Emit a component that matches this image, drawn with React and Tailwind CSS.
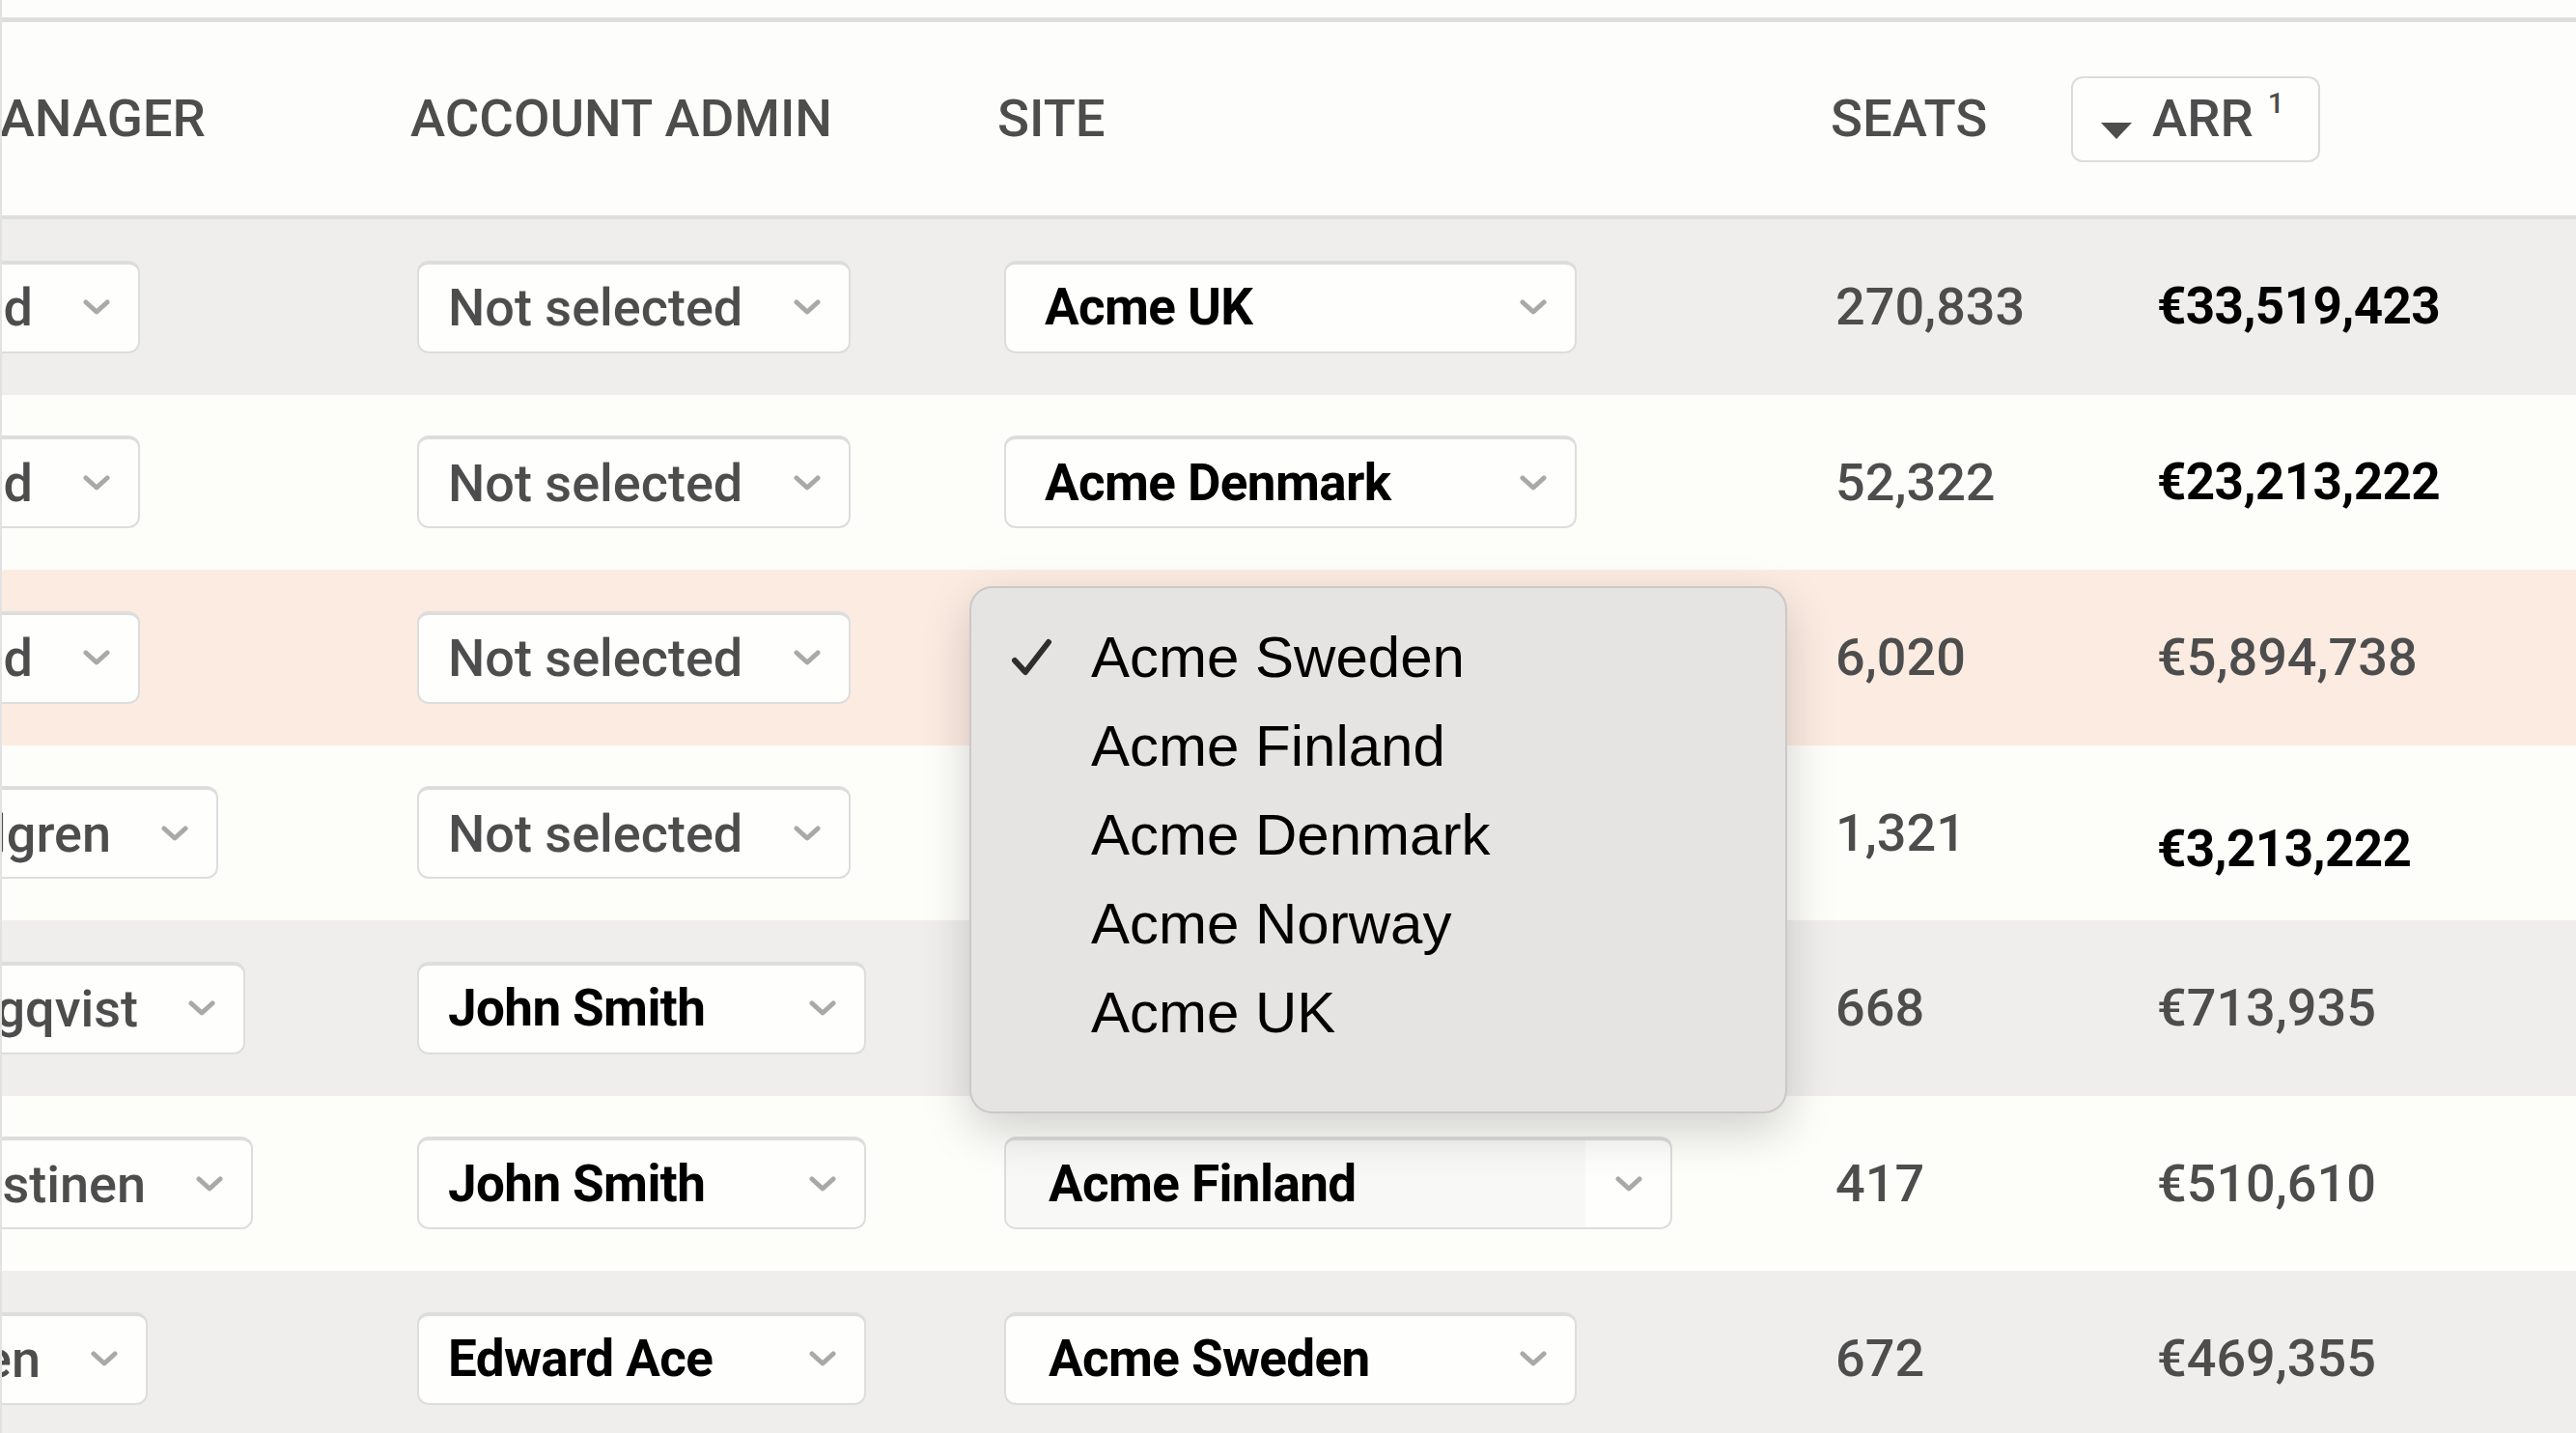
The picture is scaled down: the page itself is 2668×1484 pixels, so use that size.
import React from 'react';

const font = { fontFamily: 'Roboto, "Liberation Sans", sans-serif' };
const menuFont = { fontFamily: '"Liberation Sans", Arial, sans-serif' };

const rows = [
  {
    bg: 'bg-[#efeeed]',
    mgr: { text: 'Not selected', w: 450 },
    admin: { text: 'Not selected', w: 449, muted: true },
    site: { text: 'Acme UK', w: 593, pl: 40 },
    seats: '270,833',
    arr: '€33,519,423',
    arrBold: true,
  },
  {
    bg: 'bg-[#fdfdfa]',
    mgr: { text: 'Not selected', w: 450 },
    admin: { text: 'Not selected', w: 449, muted: true },
    site: { text: 'Acme Denmark', w: 593, pl: 40 },
    seats: '52,322',
    arr: '€23,213,222',
    arrBold: true,
  },
  {
    bg: 'bg-[#fcebe1]',
    mgr: { text: 'Not selected', w: 450 },
    admin: { text: 'Not selected', w: 449, muted: true },
    site: { text: 'Acme Sweden', w: 593, pl: 40 },
    seats: '6,020',
    arr: '€5,894,738',
  },
  {
    bg: 'bg-[#fdfdfa]',
    mgr: { text: 'Anna Dahlgren', w: 531 },
    admin: { text: 'Not selected', w: 449, muted: true },
    site: { text: 'Acme Norway', w: 593, pl: 40 },
    seats: '1,321',
    arr: '€3,213,222',
    arrBold: true,
    arrLow: true,
  },
  {
    bg: 'bg-[#efeeed]',
    mgr: { text: 'Erik Ljungqvist', w: 559 },
    admin: { text: 'John Smith', w: 465 },
    site: { text: 'Acme UK', w: 593, pl: 40 },
    seats: '668',
    arr: '€713,935',
  },
  {
    bg: 'bg-[#fdfdfa]',
    mgr: { text: 'Mikko Kastinen', w: 567 },
    admin: { text: 'John Smith', w: 465 },
    site: { text: 'Acme Finland', w: 692, pl: 44, focused: true },
    seats: '417',
    arr: '€510,610',
  },
  {
    bg: 'bg-[#efeeed]',
    mgr: { text: 'Lars Nielsen', w: 458 },
    admin: { text: 'Edward Ace', w: 465 },
    site: { text: 'Acme Sweden', w: 593, pl: 44 },
    seats: '672',
    arr: '€469,355',
  },
];

const sites = ['Acme Sweden', 'Acme Finland', 'Acme Denmark', 'Acme Norway', 'Acme UK'];

function Chevron() {
  return (
    <svg width="30" height="17" viewBox="0 0 30 17" className="shrink-0">
      <polyline points="4,3 15,13 26,3" fill="none" stroke="#a9a9a9" strokeWidth="5" strokeLinecap="round" strokeLinejoin="round" />
    </svg>
  );
}

function ManagerSelect({ text, w }) {
  return (
    <div
      style={{ width: w }}
      className="h-[96px] flex items-center justify-end gap-[51px] pr-[28px] bg-[#fefefd] rounded-[12px] border-2 border-t-[4px] border-[#dedddd] text-[54px] font-medium text-[#4d4d4d] whitespace-nowrap"
    >
      <span>{text}</span>
      <Chevron />
    </div>
  );
}

function Select({ text, w, pl = 30, muted, focused }) {
  return (
    <div
      style={{ width: w }}
      className="h-[96px] flex items-stretch bg-[#fefefd] rounded-[12px] border-2 border-t-[4px] border-[#dedddd] overflow-hidden whitespace-nowrap"
    >
      <div
        style={{ paddingLeft: pl }}
        className={`flex-1 flex items-center ${muted ? 'text-[54px] font-medium text-[#4d4d4d]' : 'text-[53px] tracking-[-0.6px] font-bold text-black'} ${focused ? 'bg-[#f8f8f6]' : ''}`}
      >
        {text}
      </div>
      <div className="w-[88px] flex items-center justify-end pr-[28px]">
        <Chevron />
      </div>
    </div>
  );
}

function SiteMenu() {
  return (
    <div
      style={menuFont}
      className="absolute left-[1316px] top-[584px] w-[847px] h-[546px] bg-[#e6e3e3] border-2 border-[#cbc8c8] rounded-[24px] shadow-[0_18px_50px_rgba(0,0,0,0.18)] pt-[26px]"
    >
      {sites.map((s, i) => (
        <div key={s} className="flex items-center h-[92px] text-[60px] text-black leading-[92px]">
          <div className="w-[124px] flex justify-start pl-[41px]">
            {i === 0 && (
              <svg width="44" height="42" viewBox="0 0 44 42">
                <polyline points="4,24 15,36 39,5" fill="none" stroke="#2e2e2e" strokeWidth="6" strokeLinecap="round" strokeLinejoin="round" />
              </svg>
            )}
          </div>
          <span>{s}</span>
        </div>
      ))}
    </div>
  );
}

export default function App() {
  return (
    <div style={font} className="w-[2668px] h-[1484px] overflow-hidden bg-[#fdfdfb] border-l-2 border-[#e3e2e2]">
      <div className="h-[18px]" />
      <div className="relative ml-[-314px] w-[3100px] border-t-[5px] border-[#dfdede]">
        {/* header */}
        <div className="grid grid-cols-[737px_608px_863px_249px_1fr] h-[204px] items-center bg-[#fdfdfb] border-b-4 border-[#dfdede] text-[54.5px] font-medium text-[#4d4d4d] whitespace-nowrap">
          <div>ACCOUNT MANAGER</div>
          <div>ACCOUNT ADMIN</div>
          <div>SITE</div>
          <div>SEATS</div>
          <div>
            <div className="w-[258px] h-[89px] flex items-center rounded-[12px] border-2 border-[#dcdcdc] bg-[#fefefd] pl-[29px]">
              <svg width="32" height="17" viewBox="0 0 32 17" className="mt-[24px]">
                <polygon points="0,0 32,0 16,17" fill="#4d4d4d" />
              </svg>
              <span className="ml-[21px]">ARR</span>
              <sup className="ml-[15px] text-[30px] -top-[0.55em]">1</sup>
            </div>
          </div>
        </div>

        {/* rows */}
        {rows.map((r, i) => (
          <div key={i} className={`grid grid-cols-[737px_608px_863px_249px_1fr] h-[181.5px] items-center ${r.bg}`}>
            <div className="pl-[7px]">
              <ManagerSelect {...r.mgr} />
            </div>
            <div className="pl-[7px]">
              <Select {...r.admin} />
            </div>
            <div className="pl-[7px]">
              <Select {...r.site} />
            </div>
            <div className="pl-[5px] text-[54px] font-medium text-[#4d4d4d]">{r.seats}</div>
            <div
              className={`pl-[89px] ${r.arrBold ? 'text-[53px] tracking-[-0.6px] font-bold text-black' : 'text-[54px] font-medium text-[#4d4d4d]'} ${r.arrLow ? 'pt-[34px]' : ''}`}
            >
              {r.arr}
            </div>
          </div>
        ))}

        <SiteMenu />
      </div>
    </div>
  );
}
